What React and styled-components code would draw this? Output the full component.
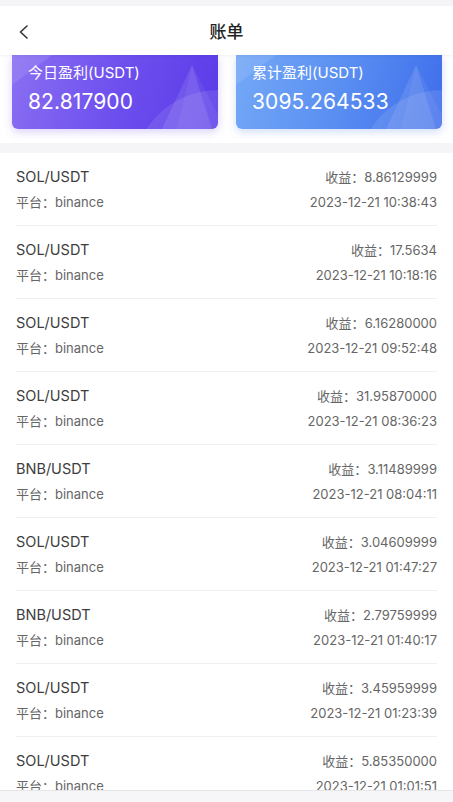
import React from "react";
import styled, { createGlobalStyle } from "styled-components";

const GlobalStyle = createGlobalStyle`
  html, body { margin: 0; padding: 0; background: #ffffff; }
  body { font-family: Inter, "Noto Sans CJK SC", sans-serif; -webkit-font-smoothing: antialiased; }
  * { box-sizing: border-box; }
`;

const Page = styled.div`
  display: flex;
  flex-direction: column;
  min-height: 802px;
  background: #ffffff;
`;

const TopStrip = styled.div`
  height: 6px;
  background: #f5f5f7;
`;

const Header = styled.header`
  position: relative;
  z-index: 2;
  height: 49px;
  display: flex;
  align-items: center;
  justify-content: center;
  background: #ffffff;
  box-shadow: 0 1px 3px rgba(0, 0, 0, 0.05);
`;

const BackButton = styled.button`
  position: absolute;
  left: 12px;
  top: 14px;
  width: 24px;
  height: 24px;
  padding: 0;
  border: none;
  background: none;
  display: flex;
  align-items: center;
  justify-content: center;
  color: #333;
`;

const Title = styled.h1`
  margin: 0;
  font-size: 17px;
  font-weight: 500;
  color: #222;
`;

const CardsSection = styled.section`
  display: grid;
  grid-template-columns: 1fr 1fr;
  gap: 18px;
  padding: 0 11px 14px 12px;
  background: #ffffff;
`;

const Card = styled.div`
  position: relative;
  overflow: hidden;
  height: 74px;
  border-radius: 0 0 6px 6px;
  padding: 7px 16px 0;
  color: #fff;
  background: ${(p) => p.$bg};
  box-shadow: 0 3px 8px ${(p) => p.$shadow};
`;

const Decor = styled.svg`
  position: absolute;
  inset: 0;
  width: 100%;
  height: 100%;
  pointer-events: none;
`;

const CardLabel = styled.div`
  position: relative;
  font-size: 15px;
  line-height: 22px;
  font-weight: 400;
`;

const CardValue = styled.div`
  position: relative;
  margin-top: 5px;
  font-size: 21px;
  line-height: 26px;
  font-weight: 400;
  letter-spacing: 0.1px;
`;

const Gap = styled.div`
  height: 10px;
  background: #f5f5f7;
`;

const List = styled.ul`
  margin: 0;
  padding: 0 16px 20px;
  list-style: none;
  background: #fff;
`;

const Row = styled.li`
  height: 73px;
  padding-top: 14px;
  border-bottom: 1px solid #efefef;
  display: grid;
  grid-template-columns: 1fr auto;
  grid-template-rows: 20px 20px;
  row-gap: 5px;
`;

const Pair = styled.div`
  font-size: 14.5px;
  line-height: 20px;
  color: #3d3d3d;
`;

const Sub = styled.div`
  font-size: 13px;
  line-height: 20px;
  color: #666;
  text-align: ${(p) => (p.$right ? "right" : "left")};
`;

const BottomBar = styled.div`
  position: fixed;
  left: 0;
  right: 0;
  bottom: 0;
  height: 12px;
  background: #f6f6f8;
  border-top: 1px solid #e6e6e8;
`;

const records = [
  ["SOL/USDT", "8.86129999", "2023-12-21 10:38:43"],
  ["SOL/USDT", "17.5634", "2023-12-21 10:18:16"],
  ["SOL/USDT", "6.16280000", "2023-12-21 09:52:48"],
  ["SOL/USDT", "31.95870000", "2023-12-21 08:36:23"],
  ["BNB/USDT", "3.11489999", "2023-12-21 08:04:11"],
  ["SOL/USDT", "3.04609999", "2023-12-21 01:47:27"],
  ["BNB/USDT", "2.79759999", "2023-12-21 01:40:17"],
  ["SOL/USDT", "3.45959999", "2023-12-21 01:23:39"],
  ["SOL/USDT", "5.85350000", "2023-12-21 01:01:51"],
];

function CardDecor() {
  return (
    <Decor viewBox="0 0 206 74" preserveAspectRatio="none">
      <path d="M0 0 L40 0 L0 30 Z" fill="rgba(255,255,255,0.10)" />
      <path d="M150 74 L180 10 L200 74 Z" fill="rgba(255,255,255,0.10)" />
      <path d="M165 74 L180 10 L206 60 L206 74 Z" fill="rgba(255,255,255,0.06)" />
      <circle cx="206" cy="120" r="85" fill="rgba(255,255,255,0.10)" />
    </Decor>
  );
}

export default function App() {
  return (
    <>
      <GlobalStyle />
      <Page>
        <TopStrip />
        <Header>
          <BackButton aria-label="back">
            <svg width="14" height="14" viewBox="0 0 14 14" fill="none">
              <path d="M10 1 L3.5 7 L10 13" stroke="#333" strokeWidth="1.6" strokeLinecap="round" strokeLinejoin="round" />
            </svg>
          </BackButton>
          <Title>账单</Title>
        </Header>
        <CardsSection>
          <Card $bg="linear-gradient(105deg, #8a6ff2 0%, #6e50ee 50%, #5a3be8 100%)" $shadow="rgba(110,80,238,0.25)">
            <CardDecor />
            <CardLabel>今日盈利(USDT)</CardLabel>
            <CardValue>82.817900</CardValue>
          </Card>
          <Card $bg="linear-gradient(105deg, #74a8f7 0%, #5a8ff2 50%, #3f6deb 100%)" $shadow="rgba(70,120,235,0.25)">
            <CardDecor />
            <CardLabel>累计盈利(USDT)</CardLabel>
            <CardValue>3095.264533</CardValue>
          </Card>
        </CardsSection>
        <Gap />
        <List>
          {records.map(([pair, profit, time], i) => (
            <Row key={i}>
              <Pair>{pair}</Pair>
              <Sub $right>收益：{profit}</Sub>
              <Sub>平台：binance</Sub>
              <Sub $right>{time}</Sub>
            </Row>
          ))}
        </List>
        <BottomBar />
      </Page>
    </>
  );
}
